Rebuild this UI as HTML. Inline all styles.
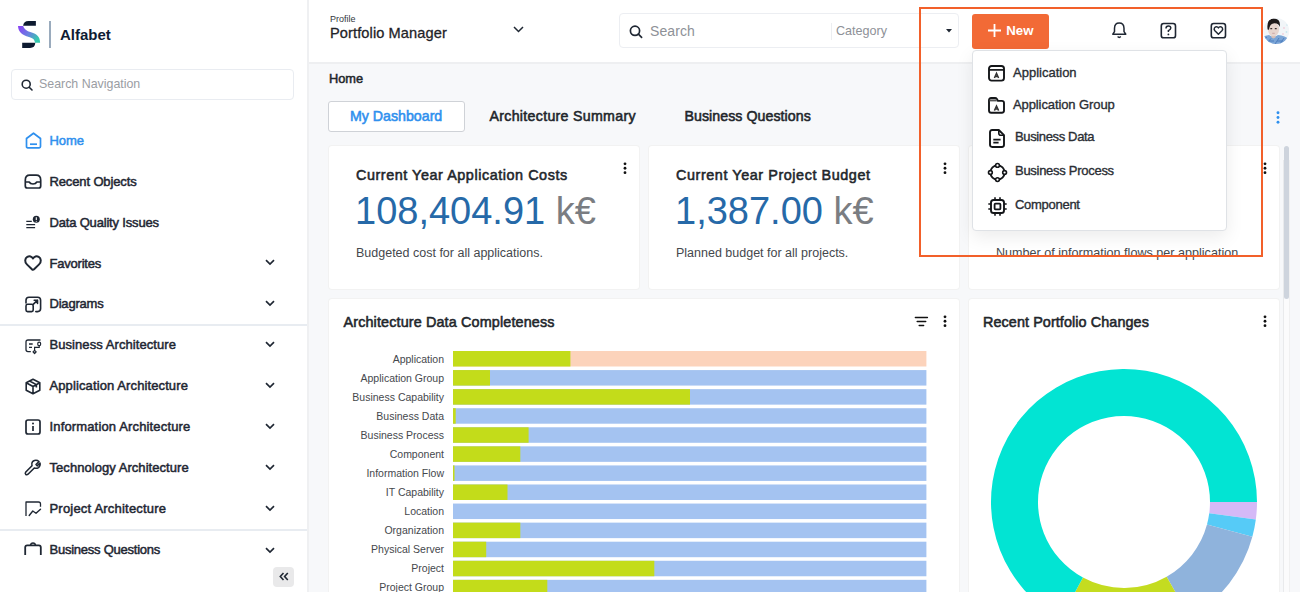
<!DOCTYPE html>
<html><head><meta charset="utf-8">
<style>
*{box-sizing:border-box;margin:0;padding:0}
html,body{width:1300px;height:592px;overflow:hidden;background:#f7f8fa;font-family:"Liberation Sans",sans-serif;color:#1f2733}
.a{position:absolute;white-space:nowrap;line-height:1}
svg{position:absolute;overflow:visible}
#side{position:absolute;left:0;top:0;width:309px;height:592px;background:#fff;border-right:2px solid #eff0f2}
#head{position:absolute;left:309px;top:0;width:991px;height:64px;background:#fff;border-bottom:2px solid #eeeff1}
.nav{font-size:13px;font-weight:400;-webkit-text-stroke:0.5px currentColor;letter-spacing:-0.05px;color:#1f2733}
.card{position:absolute;background:#fff;border-radius:3px;box-shadow:0 0 0 1px #f2f2f2}
.ttl{font-size:14.4px;font-weight:400;-webkit-text-stroke:0.55px currentColor;color:#22262b}
.num{font-size:38px;color:#2669a8}
.unit{color:#7a7d82}
.desc{font-size:12.5px;color:#45484d}
.lbl{font-size:10.5px;color:#45484d;text-align:right;width:140px}
.bar{position:absolute;left:453px;width:473px;height:15px}
.g{position:absolute;left:0;top:0;height:15px;background:#c3dc1a}
.dd{font-size:13px;color:#2a2e34;font-weight:400;-webkit-text-stroke:0.35px #2a2e34}
</style></head><body>

<!-- SIDEBAR -->
<div id="side">
  <!-- logo -->
  <svg style="left:14px;top:16px" width="40" height="36" viewBox="0 0 40 36">
    <defs><linearGradient id="lg" x1="0" y1="0" x2="1" y2="0.6"><stop offset="0" stop-color="#8a3cf6"/><stop offset="0.55" stop-color="#6a7fe0"/><stop offset="1" stop-color="#34c9ae"/></linearGradient></defs>
    <path d="M21.9 4.9 V9.8 H9.1 Q9.6 4.9 14.5 4.9 Z" fill="#0d1a30"/>
    <path d="M4 10 H9.1 C10 13 12.5 15 17 16.3 C23 18 26 21 26.1 26.7 H21 C20.6 23.6 19 22 15 21 C8 19 4.3 15.8 4 10 Z" fill="url(#lg)"/>
    <path d="M8.2 26.7 H21.3 Q21 31.9 16 31.9 H8.2 Z" fill="#0d1a30"/>
  </svg>
  <div style="position:absolute;left:49.3px;top:21px;width:1.6px;height:27px;background:#9aabbd"></div>
  <div class="a" style="left:60px;top:27px;font-size:15px;font-weight:700;color:#0f1c33">Alfabet</div>

  <!-- search nav -->
  <div style="position:absolute;left:11px;top:69px;width:283px;height:31px;border:1px solid #e9ecf1;border-radius:4px"></div>
  <svg style="left:21px;top:79px" width="12" height="12" viewBox="0 0 12 12"><circle cx="5.2" cy="5.2" r="4" fill="none" stroke="#1f2733" stroke-width="1.6"/><path d="M8.2 8.2 L11 11" stroke="#1f2733" stroke-width="1.6" stroke-linecap="round"/></svg>
  <div class="a" style="left:39px;top:78px;font-size:12.4px;color:#9a9da3">Search Navigation</div>

  <!-- nav items -->
  <svg style="left:25px;top:132px" width="17" height="17" viewBox="0 0 17 17"><path d="M1.5 6.5 L8.5 1.2 L15.5 6.5 V14.5 Q15.5 15.8 14.2 15.8 H2.8 Q1.5 15.8 1.5 14.5 Z" fill="none" stroke="#2f90ee" stroke-width="1.7" stroke-linejoin="round"/><path d="M5 12.2 H12" stroke="#2f90ee" stroke-width="1.7"/></svg>
  <div class="a nav" style="left:49.5px;top:134.3px;color:#2f90ee">Home</div>

  <svg style="left:24px;top:174px" width="18" height="15" viewBox="0 0 18 15"><path d="M1.3 12 V6.2 Q1.3 1.2 5.8 1.2 H12.2 Q16.7 1.2 16.7 6.2 V12 Q16.7 14 14.7 14 H3.3 Q1.3 14 1.3 12 Z" fill="none" stroke="#1f2733" stroke-width="1.7" stroke-linejoin="round"/><path d="M1.3 8 H5.2 Q6.2 10 9 10 Q11.8 10 12.8 8 H16.7" fill="none" stroke="#1f2733" stroke-width="1.7" stroke-linejoin="round"/></svg>
  <div class="a nav" style="left:49.5px;top:175.3px;letter-spacing:-0.13px">Recent Objects</div>

  <svg style="left:25px;top:214px" width="16" height="16" viewBox="0 0 16 16"><path d="M1.3 7.4 H6.8 M1.3 10.6 H10.1 M1.3 13.6 H10.1" stroke="#1f2733" stroke-width="1.3"/><circle cx="11.3" cy="5.3" r="3.5" fill="#1f2733"/><path d="M11.3 3.3 V6" stroke="#fff" stroke-width="1.1"/><circle cx="11.3" cy="7.3" r="0.55" fill="#fff"/></svg>
  <div class="a nav" style="left:49.5px;top:216.3px;letter-spacing:-0.18px">Data Quality Issues</div>

  <svg style="left:24.3px;top:255px" width="18" height="16" viewBox="0 0 18 16"><path d="M7.9 14.2 L2.9 9.4 C0.5 7.1 0.7 3.4 3.3 1.9 C5.4 0.7 7.8 1.3 9 3.4 C10.2 1.3 12.6 0.7 14.7 1.9 C17.3 3.4 17.5 7.1 15.1 9.4 L10.1 14.2 Q9 15.3 7.9 14.2 Z" fill="none" stroke="#1f2733" stroke-width="2" stroke-linejoin="round"/></svg>
  <div class="a nav" style="left:49.5px;top:257.3px;letter-spacing:-0.21px">Favorites</div>

  <svg style="left:25px;top:296px" width="17" height="17" viewBox="0 0 17 17"><path d="M1 7 V4.2 Q1 1.2 4 1.2 H12.6 Q15.6 1.2 15.6 4.2 V12.6 Q15.6 15.6 12.6 15.6 H10.8" fill="none" stroke="#1f2733" stroke-width="1.6" stroke-linecap="round"/><rect x="1" y="8.3" width="7.2" height="7.3" rx="1.6" fill="none" stroke="#1f2733" stroke-width="1.6"/><path d="M8.2 8.3 L12.5 4.2 M9.2 4.2 H12.5 V7.4" fill="none" stroke="#1f2733" stroke-width="1.6" stroke-linecap="round" stroke-linejoin="round"/></svg>
  <div class="a nav" style="left:49.5px;top:297.3px;letter-spacing:-0.21px">Diagrams</div>

  <div style="position:absolute;left:0;top:324px;width:307px;height:2px;background:#e8ecf1"></div>

  <svg style="left:25px;top:339px" width="18" height="16" viewBox="0 0 18 16"><path d="M15.5 1 H3 Q1 1 1 3 V10.6 Q1 12.6 3 12.6 H5.8" fill="none" stroke="#1f2733" stroke-width="1.3"/><path d="M4 5 H7.7 M4 8.3 H7" stroke="#1f2733" stroke-width="1.3"/><ellipse cx="14.2" cy="4.9" rx="1.5" ry="1.8" fill="none" stroke="#1f2733" stroke-width="1.2"/><path d="M14.2 6.7 V8.3 H9.6 V11.3" fill="none" stroke="#1f2733" stroke-width="1.2"/><path d="M9.6 11.3 L11.2 12.9 L9.6 14.5 L8 12.9 Z" fill="none" stroke="#1f2733" stroke-width="1.2" stroke-linejoin="round"/></svg>
  <div class="a nav" style="left:49.5px;top:338.3px;letter-spacing:0.07px">Business Architecture</div>

  <svg style="left:25px;top:378px" width="16" height="17" viewBox="0 0 16 17"><path d="M8 1.2 L14.8 4.8 V12.2 L8 15.8 L1.2 12.2 V4.8 Z M1.2 4.8 L8 8.5 L14.8 4.8 M8 8.5 V15.8 M4.6 3 L11.4 6.6 V9.5" fill="none" stroke="#1f2733" stroke-width="1.6" stroke-linejoin="round"/></svg>
  <div class="a nav" style="left:49.5px;top:379.3px;letter-spacing:0.11px">Application Architecture</div>

  <svg style="left:25px;top:419px" width="16" height="16" viewBox="0 0 16 16"><rect x="1" y="1" width="14" height="14" rx="2" fill="none" stroke="#1f2733" stroke-width="1.7"/><path d="M8 7 V12" stroke="#1f2733" stroke-width="1.7"/><circle cx="8" cy="4.5" r="1" fill="#1f2733"/></svg>
  <div class="a nav" style="left:49.5px;top:420.3px;letter-spacing:0.15px">Information Architecture</div>

  <svg style="left:24px;top:459px" width="17" height="17" viewBox="0 0 17 17"><path d="M10.5 1.5 Q13 0.8 15 2.5 L12 5.5 L13.2 6.8 L16 4 Q16.6 7 14.5 8.6 Q12.5 9.8 10.3 9 L4 15.2 Q2.8 16.3 1.7 15.3 Q0.8 14.2 1.8 13 L8 6.8 Q7.2 4.5 8.5 2.8 Q9.3 1.9 10.5 1.5 Z" fill="none" stroke="#1f2733" stroke-width="1.6" stroke-linejoin="round"/></svg>
  <div class="a nav" style="left:49.5px;top:461.3px;letter-spacing:0.05px">Technology Architecture</div>

  <svg style="left:25px;top:501px" width="17" height="16" viewBox="0 0 17 16"><path d="M1 15 V1 H13.5 Q15.5 1 15.5 3 V5.8" fill="none" stroke="#1f2733" stroke-width="1.3" stroke-linejoin="round"/><path d="M4.2 14.5 L7.8 10 L11 12.3 L15.5 8.2" fill="none" stroke="#1f2733" stroke-width="1.4" stroke-linejoin="round" stroke-linecap="round"/></svg>
  <div class="a nav" style="left:49.5px;top:502.3px;letter-spacing:0.20px">Project Architecture</div>

  <div style="position:absolute;left:0;top:529px;width:307px;height:2px;background:#e8ecf1"></div>

  <svg style="left:24px;top:542px" width="18" height="13" viewBox="0 0 18 13"><path d="M1.2 13 V5.3 Q1.2 3.3 3.2 3.3 H14.8 Q16.8 3.3 16.8 5.3 V13" fill="none" stroke="#1f2733" stroke-width="1.8"/><path d="M6.5 3.3 Q6.8 1 9 1 Q11.2 1 11.5 3.3" fill="none" stroke="#1f2733" stroke-width="1.5"/></svg>
  <div class="a nav" style="left:49.5px;top:543.3px;letter-spacing:-0.24px">Business Questions</div>

  <!-- chevrons -->
  <svg style="left:265px;top:259px" width="10" height="7" viewBox="0 0 10 7"><path d="M1 1.2 L5 5 L9 1.2" fill="none" stroke="#1f2733" stroke-width="1.7"/></svg>
  <svg style="left:265px;top:300px" width="10" height="7" viewBox="0 0 10 7"><path d="M1 1.2 L5 5 L9 1.2" fill="none" stroke="#1f2733" stroke-width="1.7"/></svg>
  <svg style="left:265px;top:341px" width="10" height="7" viewBox="0 0 10 7"><path d="M1 1.2 L5 5 L9 1.2" fill="none" stroke="#1f2733" stroke-width="1.7"/></svg>
  <svg style="left:265px;top:382px" width="10" height="7" viewBox="0 0 10 7"><path d="M1 1.2 L5 5 L9 1.2" fill="none" stroke="#1f2733" stroke-width="1.7"/></svg>
  <svg style="left:265px;top:423px" width="10" height="7" viewBox="0 0 10 7"><path d="M1 1.2 L5 5 L9 1.2" fill="none" stroke="#1f2733" stroke-width="1.7"/></svg>
  <svg style="left:265px;top:464px" width="10" height="7" viewBox="0 0 10 7"><path d="M1 1.2 L5 5 L9 1.2" fill="none" stroke="#1f2733" stroke-width="1.7"/></svg>
  <svg style="left:265px;top:505px" width="10" height="7" viewBox="0 0 10 7"><path d="M1 1.2 L5 5 L9 1.2" fill="none" stroke="#1f2733" stroke-width="1.7"/></svg>
  <svg style="left:265px;top:547px" width="10" height="7" viewBox="0 0 10 7"><path d="M1 1.2 L5 5 L9 1.2" fill="none" stroke="#1f2733" stroke-width="1.7"/></svg>

  <div style="position:absolute;left:273px;top:567px;width:21px;height:20px;background:#e9e9ea;border-radius:4px"></div>
  <svg style="left:279px;top:572px" width="10" height="9" viewBox="0 0 10 9"><path d="M4.5 1 L1.3 4.5 L4.5 8 M8.8 1 L5.6 4.5 L8.8 8" fill="none" stroke="#1f2733" stroke-width="1.6"/></svg>
</div>

<!-- HEADER -->
<div id="head"></div>
<div class="a" style="left:330px;top:15px;font-size:9px;color:#33373d">Profile</div>
<div class="a" style="left:330px;top:26px;font-size:14.6px;color:#1f2328;-webkit-text-stroke:0.3px #1f2328;letter-spacing:0.1px">Portfolio Manager</div>
<svg style="left:513px;top:26px" width="11" height="7" viewBox="0 0 11 7"><path d="M1 1 L5.5 5.5 L10 1" fill="none" stroke="#1f2733" stroke-width="1.5"/></svg>

<div style="position:absolute;left:619px;top:13px;width:340px;height:35px;border:1px solid #eceef2;border-radius:4px;background:#fff"></div>
<svg style="left:629px;top:25px" width="14" height="13" viewBox="0 0 14 13"><circle cx="6" cy="5.8" r="4.6" fill="none" stroke="#1f2733" stroke-width="1.7"/><path d="M9.4 9.2 L12.6 12.3" stroke="#1f2733" stroke-width="1.7" stroke-linecap="round"/></svg>
<div class="a" style="left:650px;top:24px;font-size:14px;letter-spacing:0.08px;color:#8e9197">Search</div>
<div style="position:absolute;left:831px;top:23px;width:1px;height:17px;background:#eceef1"></div>
<div class="a" style="left:836px;top:24.7px;font-size:12.6px;color:#8e9197">Category</div>
<svg style="left:946px;top:29px" width="6" height="4" viewBox="0 0 6 4"><path d="M0 0 H6 L3 3.5 Z" fill="#1f2733"/></svg>

<div style="position:absolute;left:972px;top:14px;width:77px;height:35px;background:#f26a36;border-radius:3px"></div>
<svg style="left:988.3px;top:23.5px" width="13" height="13" viewBox="0 0 13 13"><path d="M6.5 0 V13 M0 6.5 H13" stroke="#fff" stroke-width="1.8"/></svg>
<div class="a" style="left:1006.3px;top:23.5px;font-size:13.2px;font-weight:700;color:#fff">New</div>

<svg style="left:1112px;top:22px" width="15" height="17" viewBox="0 0 15 17"><path d="M7.2 1 Q11.8 1 12 6.2 V9.6 L13.8 12.2 H0.8 L2.5 9.6 V6.2 Q2.7 1 7.2 1 Z" fill="none" stroke="#1f2733" stroke-width="1.5" stroke-linejoin="round"/><path d="M5.6 14.6 Q7.2 16.3 8.8 14.6" fill="none" stroke="#1f2733" stroke-width="1.4"/></svg>
<svg style="left:1160px;top:22px" width="17" height="17" viewBox="0 0 17 17"><rect x="1.3" y="1.5" width="14.2" height="14.3" rx="2.4" fill="none" stroke="#1f2733" stroke-width="1.6"/><path d="M6 6.4 Q6 3.9 8.4 3.9 Q10.8 3.9 10.8 6.1 Q10.8 7.6 8.4 8.6 V10" fill="none" stroke="#1f2733" stroke-width="1.5"/><circle cx="8.4" cy="12.4" r="0.9" fill="#1f2733"/></svg>
<svg style="left:1210px;top:22px" width="17" height="17" viewBox="0 0 17 17"><rect x="1.3" y="1.5" width="14.2" height="14.3" rx="2.4" fill="none" stroke="#1f2733" stroke-width="1.6"/><path d="M8.4 12.2 L4.9 8.8 Q3.7 7.5 4.4 6 Q5.3 4.4 7.1 4.9 Q7.9 5.2 8.4 5.9 Q8.9 5.2 9.7 4.9 Q11.5 4.4 12.4 6 Q13.1 7.5 11.9 8.8 Z" fill="none" stroke="#1f2733" stroke-width="1.5" stroke-linejoin="round"/></svg>

<!-- avatar -->
<svg style="left:1262px;top:17px" width="28" height="28" viewBox="0 0 28 28">
  <defs><clipPath id="cp"><circle cx="14.2" cy="14" r="13"/></clipPath></defs>
  <g clip-path="url(#cp)">
    <rect width="28" height="28" fill="#f1f5f8"/>
    <circle cx="22" cy="11" r="0.9" fill="#f0cfdc"/><circle cx="24.5" cy="15" r="0.9" fill="#c7e6ef"/><circle cx="21" cy="17" r="0.9" fill="#f0cfdc"/><circle cx="25" cy="8" r="0.8" fill="#c7e6ef"/>
    <path d="M0 28 V21 Q2 18.5 7 18 L11.5 20.5 L16 18 Q23 18.5 28 23 V28 Z" fill="#7ba5d6"/>
    <path d="M1 23 L5 20 M4 27 L9 21.5 M13 27 L17 21 M18 27 L22 21 M22 28 L25 24 M7 24 H12 M15 24 H21" stroke="#4f7fbf" stroke-width="1"/>
    <path d="M9.5 17 V20.5 L11.5 21.5 L13.5 20.5 V17 Z" fill="#d8bfb5"/>
    <ellipse cx="11.5" cy="12.3" rx="5.6" ry="7" fill="#e7d5ce"/>
    <path d="M5.6 12.5 Q4.2 1.8 11.5 1.5 Q19 1.5 17.8 10 Q17 6.3 12.5 6.2 Q7.8 6 7 12.8 Z" fill="#1e1a1a"/>
    <path d="M8.3 11.6 H10.2 M12.8 11.6 H14.7" stroke="#3d3330" stroke-width="1.1"/>
    <path d="M10.2 16.3 H12.8" stroke="#c9a3a3" stroke-width="0.9"/>
  </g>
</svg>

<!-- MAIN -->
<div class="a" style="left:329px;top:72.8px;font-size:12.8px;font-weight:400;-webkit-text-stroke:0.5px currentColor;color:#22262b">Home</div>

<div style="position:absolute;left:328px;top:101px;width:137px;height:31px;border:1px solid #cfd2d7;border-radius:3px;background:#fff"></div>
<div class="a" style="left:350px;top:109px;font-size:14.2px;font-weight:400;-webkit-text-stroke:0.55px currentColor;color:#2f90ee">My Dashboard</div>
<div class="a" style="left:489.5px;top:109px;font-size:14.2px;font-weight:400;-webkit-text-stroke:0.55px currentColor;letter-spacing:0.3px;color:#22262b">Architecture Summary</div>
<div class="a" style="left:684.5px;top:109px;font-size:14.2px;font-weight:400;-webkit-text-stroke:0.55px currentColor;letter-spacing:0.05px;color:#22262b">Business Questions</div>
<svg style="left:1276px;top:111px" width="4" height="13" viewBox="0 0 4 13"><circle cx="2" cy="1.8" r="1.45" fill="#2f90ee"/><circle cx="2" cy="6.5" r="1.45" fill="#2f90ee"/><circle cx="2" cy="11.2" r="1.45" fill="#2f90ee"/></svg>

<!-- row 1 cards -->
<div class="card" style="left:329px;top:146px;width:310px;height:143px"></div>
<div class="card" style="left:649px;top:146px;width:310px;height:143px"></div>
<div class="card" style="left:969px;top:146px;width:310px;height:143px"></div>

<div class="a ttl" style="left:356px;top:167.8px;letter-spacing:0.55px">Current Year Application Costs</div>
<div class="a num" style="left:355px;top:192px">108,404.91 <span class="unit">k€</span></div>
<div class="a desc" style="left:356px;top:246.6px">Budgeted cost for all applications.</div>
<svg style="left:622.6px;top:162.4px" width="4" height="13" viewBox="0 0 4 13"><circle cx="2" cy="1.8" r="1.4" fill="#111"/><circle cx="2" cy="6.25" r="1.4" fill="#111"/><circle cx="2" cy="10.7" r="1.4" fill="#111"/></svg>

<div class="a ttl" style="left:676px;top:167.8px;letter-spacing:0.57px">Current Year Project Budget</div>
<div class="a num" style="left:675px;top:192px">1,387.00 <span class="unit">k€</span></div>
<div class="a desc" style="left:676px;top:246.6px">Planned budget for all projects.</div>
<svg style="left:942.6px;top:162.4px" width="4" height="13" viewBox="0 0 4 13"><circle cx="2" cy="1.8" r="1.4" fill="#111"/><circle cx="2" cy="6.25" r="1.4" fill="#111"/><circle cx="2" cy="10.7" r="1.4" fill="#111"/></svg>

<div class="a desc" style="left:996px;top:246.6px;font-size:12.6px">Number of information flows per application</div>
<svg style="left:1262.6px;top:162.4px" width="4" height="13" viewBox="0 0 4 13"><circle cx="2" cy="1.8" r="1.4" fill="#111"/><circle cx="2" cy="6.25" r="1.4" fill="#111"/><circle cx="2" cy="10.7" r="1.4" fill="#111"/></svg>

<!-- row 2 cards -->
<div class="card" style="left:329px;top:299px;width:630px;height:300px"></div>
<div class="card" style="left:969px;top:299px;width:310px;height:300px"></div>

<div class="a ttl" style="left:343.5px;top:314.6px;letter-spacing:0.13px">Architecture Data Completeness</div>
<svg style="left:914px;top:316px" width="15" height="11" viewBox="0 0 15 11"><path d="M1.4 1.6 H13.4 M3.2 5.5 H11.7 M5.2 9.4 H9.6" stroke="#111" stroke-width="1.5" stroke-linecap="round"/></svg>
<svg style="left:942.6px;top:315.4px" width="4" height="13" viewBox="0 0 4 13"><circle cx="2" cy="1.8" r="1.4" fill="#111"/><circle cx="2" cy="6.25" r="1.4" fill="#111"/><circle cx="2" cy="10.7" r="1.4" fill="#111"/></svg>

<div class="a ttl" style="left:983px;top:314.6px;letter-spacing:0.08px">Recent Portfolio Changes</div>
<svg style="left:1262.6px;top:315.4px" width="4" height="13" viewBox="0 0 4 13"><circle cx="2" cy="1.8" r="1.4" fill="#111"/><circle cx="2" cy="6.25" r="1.4" fill="#111"/><circle cx="2" cy="10.7" r="1.4" fill="#111"/></svg>

<!-- bar chart -->
<!--BARS-->
<div class="a lbl" style="left:304px;top:353.60px">Application</div>
<div class="a lbl" style="left:304px;top:372.67px">Application Group</div>
<div class="a lbl" style="left:304px;top:391.74px">Business Capability</div>
<div class="a lbl" style="left:304px;top:410.81px">Business Data</div>
<div class="a lbl" style="left:304px;top:429.88px">Business Process</div>
<div class="a lbl" style="left:304px;top:448.95px">Component</div>
<div class="a lbl" style="left:304px;top:468.02px">Information Flow</div>
<div class="a lbl" style="left:304px;top:487.09px">IT Capability</div>
<div class="a lbl" style="left:304px;top:506.16px">Location</div>
<div class="a lbl" style="left:304px;top:525.23px">Organization</div>
<div class="a lbl" style="left:304px;top:544.30px">Physical Server</div>
<div class="a lbl" style="left:304px;top:563.37px">Project</div>
<div class="a lbl" style="left:304px;top:582.44px">Project Group</div>
<svg style="left:453px;top:340px" width="474" height="260" viewBox="0 0 474 260"><rect x="0" y="11.00" width="473.4" height="15.5" fill="#fcd3bb"/><rect x="0" y="11.00" width="117.4" height="15.5" fill="#c3dc1a"/><rect x="0" y="30.07" width="473.4" height="15.5" fill="#a4c3f1"/><rect x="0" y="30.07" width="37.0" height="15.5" fill="#c3dc1a"/><rect x="0" y="49.14" width="473.4" height="15.5" fill="#a4c3f1"/><rect x="0" y="49.14" width="237.0" height="15.5" fill="#c3dc1a"/><rect x="0" y="68.21" width="473.4" height="15.5" fill="#a4c3f1"/><rect x="0" y="68.21" width="2.7" height="15.5" fill="#c3dc1a"/><rect x="0" y="87.28" width="473.4" height="15.5" fill="#a4c3f1"/><rect x="0" y="87.28" width="75.6" height="15.5" fill="#c3dc1a"/><rect x="0" y="106.35" width="473.4" height="15.5" fill="#a4c3f1"/><rect x="0" y="106.35" width="67.3" height="15.5" fill="#c3dc1a"/><rect x="0" y="125.42" width="473.4" height="15.5" fill="#a4c3f1"/><rect x="0" y="125.42" width="1.5" height="15.5" fill="#c3dc1a"/><rect x="0" y="144.49" width="473.4" height="15.5" fill="#a4c3f1"/><rect x="0" y="144.49" width="54.5" height="15.5" fill="#c3dc1a"/><rect x="0" y="163.56" width="473.4" height="15.5" fill="#a4c3f1"/><rect x="0" y="182.63" width="473.4" height="15.5" fill="#a4c3f1"/><rect x="0" y="182.63" width="67.3" height="15.5" fill="#c3dc1a"/><rect x="0" y="201.70" width="473.4" height="15.5" fill="#a4c3f1"/><rect x="0" y="201.70" width="33.2" height="15.5" fill="#c3dc1a"/><rect x="0" y="220.77" width="473.4" height="15.5" fill="#a4c3f1"/><rect x="0" y="220.77" width="201.3" height="15.5" fill="#c3dc1a"/><rect x="0" y="239.84" width="473.4" height="15.5" fill="#a4c3f1"/><rect x="0" y="239.84" width="94.3" height="15.5" fill="#c3dc1a"/></svg>
<!--/BARS-->

<!-- donut -->
<svg style="left:991px;top:369px" width="266" height="266" viewBox="-133 -133 266 266"><!--DONUT--><path d="M133.00 0.00 A133 133 0 0 1 131.83 17.59 L85.24 11.37 A86 86 0 0 0 86.00 0.00 Z" fill="#d5b9f7"/><path d="M131.83 17.59 A133 133 0 0 1 128.35 34.87 L82.99 22.55 A86 86 0 0 0 85.24 11.37 Z" fill="#56cbf7"/><path d="M128.35 34.87 A133 133 0 0 1 65.90 115.53 L42.61 74.70 A86 86 0 0 0 82.99 22.55 Z" fill="#8fb3dc"/><path d="M65.90 115.53 A133 133 0 0 1 -63.46 116.88 L-41.04 75.58 A86 86 0 0 0 42.61 74.70 Z" fill="#c4dc20"/><path d="M-63.46 116.88 A133 133 0 1 1 133.00 -0.00 L86.00 -0.00 A86 86 0 1 0 -41.04 75.58 Z" fill="#02e4d3"/><!--/DONUT--></svg>

<!-- scrollbar -->
<div style="position:absolute;left:1283px;top:160px;width:7px;height:440px;background:#fbfbfc;border-left:1.5px solid #e9eaec;border-right:1px solid #f0f0f1"></div>
<div style="position:absolute;left:1284px;top:145.5px;width:5px;height:153px;background:#ced4dd;border-radius:3px"></div>

<!-- DROPDOWN -->
<div style="position:absolute;left:972px;top:49.5px;width:255px;height:181px;background:#fff;border:1px solid #dfe2e6;border-radius:4px;box-shadow:0 6px 18px rgba(0,0,0,0.08)"></div>
<svg style="left:988px;top:65px" width="17" height="17" viewBox="0 0 17 17"><rect x="1" y="1" width="15" height="14.6" rx="2.6" fill="none" stroke="#141619" stroke-width="1.9"/><path d="M1 4.9 H16" stroke="#141619" stroke-width="1.7"/><path d="M6.4 13 L8.5 8.4 L10.6 13 M7.3 11.5 H9.7" fill="none" stroke="#333" stroke-width="1.5"/></svg>
<div class="a dd" style="left:1013px;top:65.8px">Application</div>
<svg style="left:988px;top:97px" width="17" height="17" viewBox="0 0 17 17"><path d="M1 13.6 V3.2 Q1 1 3.2 1 H7 Q8.2 1 8.9 2 L10 3.9 H13.8 Q16 3.9 16 6.1 V13.6 Q16 15.8 13.8 15.8 H3.2 Q1 15.8 1 13.6 Z" fill="none" stroke="#141619" stroke-width="1.9" stroke-linejoin="round"/><path d="M1.5 3.4 H8.8" stroke="#555" stroke-width="2"/><path d="M6.4 13.6 L8.5 9 L10.6 13.6 M7.3 12.1 H9.7" fill="none" stroke="#333" stroke-width="1.5"/></svg>
<div class="a dd" style="left:1013px;top:97.8px;letter-spacing:-0.1px">Application Group</div>
<svg style="left:989px;top:129px" width="16" height="19" viewBox="0 0 16 19"><path d="M1 3.2 Q1 1 3.2 1 H9.8 L15 6.2 V15.8 Q15 18 12.8 18 H3.2 Q1 18 1 15.8 Z" fill="none" stroke="#141619" stroke-width="1.9" stroke-linejoin="round"/><path d="M9.8 1 V4.2 Q9.8 6.2 11.8 6.2 H15" fill="none" stroke="#141619" stroke-width="1.6"/><path d="M4.3 10.6 H11.6 M4.3 13.6 H9.6" stroke="#141619" stroke-width="1.7"/></svg>
<div class="a dd" style="left:1015px;top:130.1px;letter-spacing:-0.36px">Business Data</div>
<svg style="left:988px;top:163px" width="19" height="19" viewBox="0 0 19 19"><circle cx="9.5" cy="9.5" r="7.1" fill="none" stroke="#141619" stroke-width="1.8"/><circle cx="9.5" cy="2.4" r="1.9" fill="#fff" stroke="#141619" stroke-width="1.6"/><circle cx="9.5" cy="16.6" r="1.9" fill="#fff" stroke="#141619" stroke-width="1.6"/><circle cx="2.4" cy="9.5" r="1.9" fill="#fff" stroke="#141619" stroke-width="1.6"/><circle cx="16.6" cy="9.5" r="1.9" fill="#fff" stroke="#141619" stroke-width="1.6"/></svg>
<div class="a dd" style="left:1015px;top:163.8px;letter-spacing:-0.28px">Business Process</div>
<svg style="left:988px;top:197px" width="19" height="19" viewBox="0 0 19 19"><rect x="3" y="3" width="13" height="13" rx="2.6" fill="none" stroke="#141619" stroke-width="1.9"/><rect x="6.6" y="6.6" width="5.8" height="5.8" rx="0.9" fill="none" stroke="#141619" stroke-width="1.8"/><path d="M7 0.3 V3 M12 0.3 V3 M7 16 V18.7 M12 16 V18.7 M0.3 7 H3 M0.3 12 H3 M16 7 H18.7 M16 12 H18.7" stroke="#141619" stroke-width="1.6"/></svg>
<div class="a dd" style="left:1015px;top:197.8px;letter-spacing:-0.28px">Component</div>

<!-- orange highlight -->
<div style="position:absolute;left:919px;top:7px;width:344px;height:250px;border:2px solid #f2602a"></div>

</body></html>
